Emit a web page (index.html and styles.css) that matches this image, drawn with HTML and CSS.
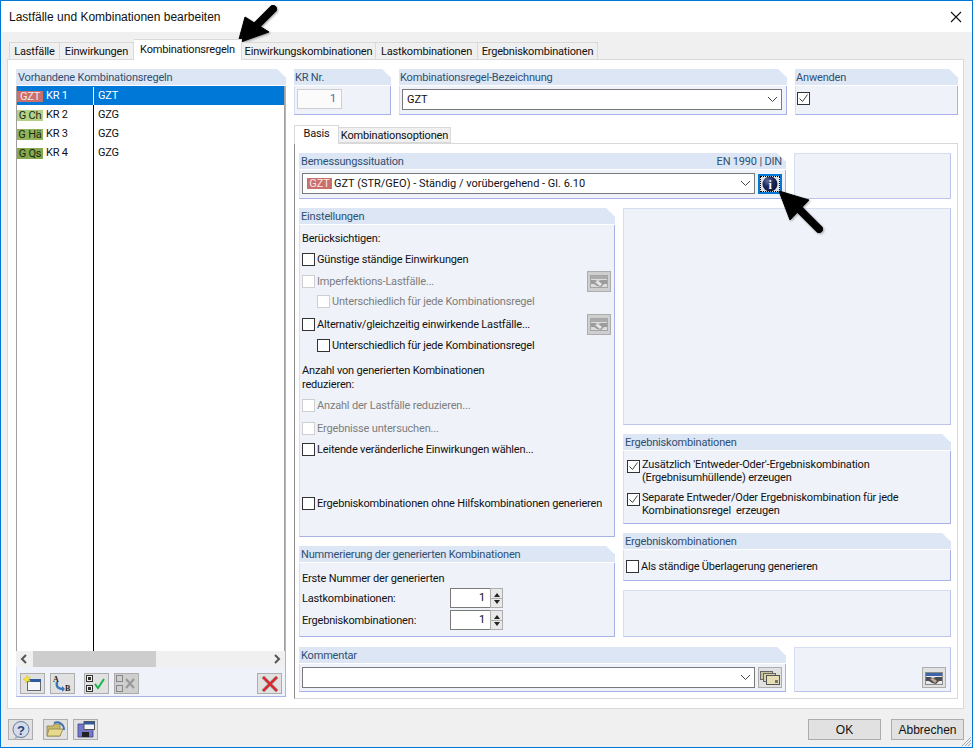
FILE: index.html
```html
<!DOCTYPE html>
<html lang="de">
<head>
    <meta charset="UTF-8">
    <title>Lastfälle und Kombinationen bearbeiten</title>
    <link rel="stylesheet" href="styles.css">
</head>
<body>
<div class="dialog">
    <div class="titlebar">
        <span>Lastfälle und Kombinationen bearbeiten</span>
        <svg class="close" width="12" height="12" viewBox="0 0 12 12"><path d="M1 1l10 10M11 1L1 11" stroke="#111" stroke-width="1.1" fill="none"/></svg>
    </div>

    <div class="main">
        <div class="tabs">
            <div class="tab t1">Lastfälle</div>
            <div class="tab t2">Einwirkungen</div>
            <div class="tab t3 active">Kombinationsregeln</div>
            <div class="tab t4">Einwirkungskombinationen</div>
            <div class="tab t5">Lastkombinationen</div>
            <div class="tab t6">Ergebniskombinationen</div>
        </div>

        <div class="panel">
            <!-- Liste links -->
            <section class="group rules">
                <h3 class="group-head">Vorhandene Kombinationsregeln</h3>
                <div class="list">
                    <div class="list-row selected"><div class="cell-a"><span class="badge gzt">GZT</span>KR 1</div><div class="cell-b">GZT</div></div>
                    <div class="list-row"><div class="cell-a"><span class="badge gch">G Ch</span>KR 2</div><div class="cell-b">GZG</div></div>
                    <div class="list-row"><div class="cell-a"><span class="badge gha">G Hä</span>KR 3</div><div class="cell-b">GZG</div></div>
                    <div class="list-row"><div class="cell-a"><span class="badge gqs">G Qs</span>KR 4</div><div class="cell-b">GZG</div></div>
                </div>
                <div class="hscroll">
                    <svg class="scroll-arrow" width="17" height="16" viewBox="0 0 17 16"><path d="M10 4L6 8l4 4" stroke="#555" stroke-width="2" fill="none"/></svg>
                    <div class="hscroll-track"><div class="hscroll-thumb"></div></div>
                    <svg class="scroll-arrow" width="17" height="16" viewBox="0 0 17 16"><path d="M7 4l4 4-4 4" stroke="#555" stroke-width="2" fill="none"/></svg>
                </div>
                <div class="list-tools">
                    <button class="icon-btn">
                        <svg width="19" height="17" viewBox="0 0 19 17"><rect x="4.500" y="4.500" width="13" height="11" fill="#f4f6f8" stroke="#667"/><rect x="4" y="4" width="14" height="3" fill="#2f5a9c"/><path d="M4 0l1 2.400 2.600-.4L6 4l1.400 2.400L4.800 6 3 8 2.600 5.400 0 4.400 2.400 3z" fill="#f5e23a" stroke="#c9b520" stroke-width=".4"/></svg>
                    </button>
                    <button class="icon-btn">
                        <svg width="21" height="19" viewBox="0 0 21 19"><text x="1" y="8" class="ico-letter">A</text><text x="13" y="17" class="ico-letter">B</text><path d="M5 8c-1 5 1 7 7 7" stroke="#3b78b8" stroke-width="2.400" fill="none"/><path d="M10 12l3 3-3 3z" fill="#3b78b8"/></svg>
                    </button>
                    <button class="icon-btn gap-l">
                        <svg width="21" height="18" viewBox="0 0 21 18"><rect x=".5" y=".5" width="6" height="6" fill="#eee" stroke="#333"/><rect x="2" y="2" width="3" height="3" fill="#333"/><rect x=".5" y="10.500" width="6" height="6" fill="#eee" stroke="#333"/><rect x="2" y="12" width="3" height="3" fill="#333"/><path d="M9 9l3 4 6-9" stroke="#16b54a" stroke-width="2" fill="none"/></svg>
                    </button>
                    <button class="icon-btn off">
                        <svg width="21" height="18" viewBox="0 0 21 18"><rect x=".5" y=".5" width="6" height="6" fill="none" stroke="#888"/><rect x=".5" y="10.500" width="6" height="6" fill="none" stroke="#888"/><path d="M10 4l8 9M18 4l-8 9" stroke="#999" stroke-width="2.200"/></svg>
                    </button>
                    <button class="icon-btn push-r">
                        <svg width="20" height="18" viewBox="0 0 20 18"><path d="M3 2l14 14M17 2L3 16" stroke="#9a9a9a" stroke-width="3.600"/><path d="M3 2l14 14M17 2L3 16" stroke="#e0232a" stroke-width="2.200"/></svg>
                    </button>
                </div>
            </section>

            <!-- rechte Seite -->
            <div class="right">
                <div class="top-row">
                    <section class="group kr-nr">
                        <h3 class="group-head">KR Nr.</h3>
                        <div class="group-body"><div class="num-box">1</div></div>
                    </section>
                    <section class="group kr-name">
                        <h3 class="group-head">Kombinationsregel-Bezeichnung</h3>
                        <div class="group-body">
                            <div class="combo wide"><span>GZT</span><svg class="chev" width="11" height="7" viewBox="0 0 11 7"><path d="M1 1l4.500 4.500L10 1" stroke="#444" fill="none"/></svg></div>
                        </div>
                    </section>
                    <section class="group kr-use">
                        <h3 class="group-head">Anwenden</h3>
                        <div class="group-body">
                            <span class="check on"><svg width="11" height="11" viewBox="0 0 11 11"><path d="M1.500 5.500l3 3 5-7" stroke="#444" fill="none"/></svg></span>
                        </div>
                    </section>
                </div>

                <div class="inner-tabs">
                    <div class="itab active">Basis</div>
                    <div class="itab">Kombinationsoptionen</div>
                </div>

                <div class="inner-panel">
                    <div class="band">
                        <section class="group situation">
                            <h3 class="group-head spread"><span>Bemessungssituation</span><span>EN 1990 | DIN</span></h3>
                            <div class="group-body">
                                <div class="combo-line">
                                    <div class="combo grow"><span class="badge gzt inline">GZT</span><span>GZT (STR/GEO) - Ständig / vorübergehend - Gl. 6.10</span><svg class="chev" width="11" height="7" viewBox="0 0 11 7"><path d="M1 1l4.500 4.500L10 1" stroke="#444" fill="none"/></svg></div>
                                    <button class="icon-btn info">
                                        <svg width="16" height="16" viewBox="0 0 16 16"><defs><radialGradient id="infoGrad" cx=".35" cy=".3" r=".8"><stop offset="0" stop-color="#5f6fa0"/><stop offset=".45" stop-color="#1c2a5c"/><stop offset="1" stop-color="#0d1538"/></radialGradient></defs><circle cx="8" cy="8" r="7.500" fill="url(#infoGrad)"/><text x="8" y="12.500" class="ico-i">i</text></svg>
                                    </button>
                                </div>
                            </div>
                        </section>
                        <section class="blank grow"></section>
                    </div>

                    <div class="middle">
                        <div class="col-left">
                            <section class="group settings">
                                <h3 class="group-head">Einstellungen</h3>
                                <div class="group-body">
                                    <div class="row">Berücksichtigen:</div>
                                    <div class="row m1"><span class="check"></span>Günstige ständige Einwirkungen</div>
                                    <div class="row m2 off"><span class="check"></span>Imperfektions-Lastfälle...<button class="icon-btn small off"><svg width="18" height="14" viewBox="0 0 18 14"><use href="#hands-off"/></svg></button></div>
                                    <div class="row indent off"><span class="check"></span>Unterschiedlich für jede Kombinationsregel</div>
                                    <div class="row m3"><span class="check"></span>Alternativ/gleichzeitig einwirkende Lastfälle...<button class="icon-btn small off"><svg width="18" height="14" viewBox="0 0 18 14"><use href="#hands-off"/></svg></button></div>
                                    <div class="row m1 indent"><span class="check"></span>Unterschiedlich für jede Kombinationsregel</div>
                                    <div class="row-text">Anzahl von generierten Kombinationen<br>reduzieren:</div>
                                    <div class="row m3 off"><span class="check"></span>Anzahl der Lastfälle reduzieren...</div>
                                    <div class="row m3 off"><span class="check"></span>Ergebnisse untersuchen...</div>
                                    <div class="row m1"><span class="check"></span>Leitende veränderliche Einwirkungen wählen...</div>
                                    <div class="row m34"><span class="check"></span>Ergebniskombinationen ohne Hilfskombinationen generieren</div>
                                </div>
                            </section>
                            <section class="group numbering">
                                <h3 class="group-head">Nummerierung der generierten Kombinationen</h3>
                                <div class="group-body">
                                    <div class="row">Erste Nummer der generierten</div>
                                    <div class="row spin-row first">Lastkombinationen:<div class="spin"><div class="spin-val">1</div><div class="spin-btns"><i class="up"></i><i class="down"></i></div></div></div>
                                    <div class="row spin-row">Ergebniskombinationen:<div class="spin"><div class="spin-val">1</div><div class="spin-btns"><i class="up"></i><i class="down"></i></div></div></div>
                                </div>
                            </section>
                        </div>
                        <div class="col-right">
                            <section class="blank tall"></section>
                            <section class="group either">
                                <h3 class="group-head">Ergebniskombinationen</h3>
                                <div class="group-body">
                                    <div class="wrap-row"><span class="check on"><svg width="11" height="11" viewBox="0 0 11 11"><path d="M1.500 5.500l3 3 5-7" stroke="#444" fill="none"/></svg></span><div>Zusätzlich 'Entweder-Oder'-Ergebniskombination<br>(Ergebnisumhüllende) erzeugen</div></div>
                                    <div class="wrap-row"><span class="check on"><svg width="11" height="11" viewBox="0 0 11 11"><path d="M1.500 5.500l3 3 5-7" stroke="#444" fill="none"/></svg></span><div>Separate Entweder/Oder Ergebniskombination für jede<br>Kombinationsregel  erzeugen</div></div>
                                </div>
                            </section>
                            <section class="group permanent">
                                <h3 class="group-head">Ergebniskombinationen</h3>
                                <div class="group-body"><div class="row"><span class="check"></span>Als ständige Überlagerung generieren</div></div>
                            </section>
                            <section class="blank grow"></section>
                        </div>
                    </div>

                    <div class="band">
                        <section class="group situation comment">
                            <h3 class="group-head">Kommentar</h3>
                            <div class="group-body">
                                <div class="combo-line">
                                    <div class="combo grow"><svg class="chev" width="11" height="7" viewBox="0 0 11 7"><path d="M1 1l4.500 4.500L10 1" stroke="#444" fill="none"/></svg></div>
                                    <button class="icon-btn small">
                                        <svg width="20" height="14" viewBox="0 0 20 14"><rect x=".5" y=".5" width="12" height="8" fill="#c9c39a" stroke="#666"/><rect x="3.500" y="2.500" width="12" height="8" fill="#d8d2a8" stroke="#666"/><rect x="6.500" y="4.500" width="13" height="9" fill="#e6dfb6" stroke="#555"/><rect x="15" y="9" width="3" height="3" fill="#777"/></svg>
                                    </button>
                                </div>
                            </div>
                        </section>
                        <section class="blank grow corner-btn">
                            <button class="icon-btn small"><svg width="18" height="14" viewBox="0 0 18 14"><use href="#hands"/></svg></button>
                        </section>
                    </div>
                </div>
            </div>
        </div>

        <div class="bottom">
            <button class="icon-btn"><svg width="20" height="18" viewBox="0 0 20 18"><circle cx="10" cy="8.500" r="8" fill="#d5dbe8" stroke="#667a9c"/><path d="M5 15l-2 3 6-2z" fill="#9aa6bd"/><text x="10" y="14" class="ico-q">?</text></svg></button>
            <button class="icon-btn open"><svg width="20" height="17" viewBox="0 0 20 17"><path d="M1 5h6l1-2h6v12H1z" fill="#c9b969" stroke="#8d8350" stroke-width=".8"/><path d="M1 15l2-7h14l-3 7z" fill="#e6d98c" stroke="#8d8350" stroke-width=".8"/><path d="M8 2c5-2 10 1 10 7" stroke="#3f74b0" stroke-width="2" fill="none"/></svg></button>
            <button class="icon-btn"><svg width="18" height="17" viewBox="0 0 18 17"><path d="M1 3h13l2 2v11H1z" fill="#7478c8" stroke="#3a3f80" stroke-width=".8"/><rect x="5" y="11" width="7" height="5" fill="#222"/><rect x="7" y=".5" width="10.500" height="8" fill="#f2f4f8" stroke="#555"/><rect x="7" y="1" width="10.500" height="2.500" fill="#2f5a9c"/></svg></button>
            <div class="bottom-space"></div>
            <button class="text-btn">OK</button>
            <button class="text-btn">Abbrechen</button>
        </div>
    </div>

    <!-- gemeinsame Symbole -->
    <svg class="defs" width="0" height="0">
        <symbol id="hands" viewBox="0 0 18 14"><rect x=".5" y="1.500" width="17" height="12" fill="#e9e9e9" stroke="#8a8a8a"/><rect x="1" y="2" width="16" height="3" fill="#3d63a8"/><path d="M1 6h4l3 1 3-1h6v4h-3l-3 3-4-1-3-2H1z" fill="#4a4d55"/><path d="M5 8l3-1 4 3-2 2z" fill="#c9ab8c"/></symbol>
        <symbol id="hands-off" viewBox="0 0 18 14"><rect x=".5" y="1.500" width="17" height="12" fill="#dcdcdc" stroke="#a5a5a5"/><rect x="1" y="2" width="16" height="3" fill="#ababab"/><path d="M1 6h4l3 1 3-1h6v4h-3l-3 3-4-1-3-2H1z" fill="#9c9c9c"/><path d="M5 8l3-1 4 3-2 2z" fill="#e8e8e8"/></symbol>
    </svg>

    <!-- Pfeile aus dem Screenshot -->
    <svg class="arrow arrow-tab" width="50" height="50" viewBox="0 0 50 50"><path d="M10 43L17 17 41 32z" fill="#000" stroke="#000" stroke-linejoin="round"/><path d="M29 25L45 9" stroke="#000" stroke-width="8" stroke-linecap="round"/></svg>
    <svg class="arrow arrow-info" width="50" height="50" viewBox="0 0 50 50"><path d="M4 5L15 34 34 14z" fill="#000" stroke="#000" stroke-linejoin="round"/><path d="M25 24L44 43" stroke="#000" stroke-width="8" stroke-linecap="round"/></svg>
    <svg class="grip" width="12" height="12" viewBox="0 0 12 12"><path d="M11 2L2 11M11 5l-6 6M11 8l-3 3" stroke="#aaa"/></svg>
</div>
</body>
</html>
```
FILE: styles.css
```css
:root {
    --head: #dce6f4;
    --group: #eff3f9;
    --edge: #a9b2e6;
    --edge-light: #d6def2;
    --head-text: #2f4f72;
}

* {
    margin: 0;
    padding: 0;
    box-sizing: border-box;
}

body {
    font-family: Roboto, "Liberation Sans", Arial, sans-serif;
    font-size: 11px;
    letter-spacing: -.18px;
    color: #111;
    background: #fff;
    overflow: hidden;
}

button {
    font: inherit;
    color: inherit;
    letter-spacing: inherit;
}

.dialog {
    position: relative;
    width: 973px;
    height: 748px;
    border: 1px solid #0078d7;
    display: flex;
    flex-direction: column;
    background: #fff;
}

.titlebar {
    height: 31px;
    flex: none;
    display: flex;
    align-items: center;
    justify-content: space-between;
    padding: 0 10px 0 8px;
    font-family: "Liberation Sans", Arial, sans-serif;
    font-size: 12px;
    letter-spacing: 0;
}

.main {
    flex: 1;
    background: #f0f0f0;
    padding: 7px 8px 0 6px;
    display: flex;
    flex-direction: column;
}

/* Tabs oben */
.tabs {
    display: flex;
    align-items: flex-end;
    height: 21px;
    margin: 0 0 -1px 2px;
    position: relative;
    z-index: 1;
}

.tab {
    height: 18px;
    background: #f0f0f0;
    border: 1px solid #d9d9d9;
    border-left: 0;
    text-align: center;
    line-height: 18px;
}

.t1 { width: 51px; border-left: 1px solid #d9d9d9; }
.t2 { width: 74px; }
.t3 { width: 108px; }
.t4 { width: 134px; }
.t5 { width: 102px; }
.t6 { width: 120px; }

.tab.active {
    height: 21px;
    background: #fff;
    border-bottom: 0;
    line-height: 19px;
}

.panel {
    width: 957px;
    height: 650px;
    background: #fff;
    border: 1px solid #d9d9d9;
    padding: 9px 0 0 8px;
    display: flex;
    gap: 8px;
    align-items: flex-start;
}

/* Gruppen */
.group {
    background: var(--group);
    border-left: 1px solid var(--edge-light);
    border-right: 1px solid var(--edge);
    border-bottom: 1px solid var(--edge);
    clip-path: polygon(0 0, calc(100% - 9px) 0, 100% 9px, 100% 100%, 0 100%);
    display: flex;
    flex-direction: column;
}

.group-head {
    flex: none;
    height: 17px;
    background: var(--head);
    border-bottom: 1px solid #fff;
    margin: 0 -1px 0 -1px;
    padding: 0 2px;
    font-size: 11px;
    font-weight: normal;
    line-height: 17px;
    color: var(--head-text);
}

.top-row .group-head {
    padding: 0 1px;
}

.group-head.spread {
    display: flex;
    justify-content: space-between;
    padding-right: 4px;
}

.group-body {
    flex: 1;
    min-height: 0;
}

.blank {
    background: var(--group);
    border: 1px solid var(--edge-light);
    border-right-color: #bcc4ec;
    border-bottom-color: #bcc4ec;
}

.grow {
    flex: 1;
}

/* Liste */
.rules {
    width: 270px;
    height: 628px;
}

.list {
    height: 565px;
    flex: none;
    margin-left: -1px;
    border-left: 1px solid #a0a0a0;
    border-right: 1px solid #a0a0a0;
    background: linear-gradient(#000, #000) 76px 0 / 1px 100% no-repeat #fff;
}

.list-row {
    display: flex;
    height: 19px;
    padding-top: 1px;
    line-height: 18px;
}

.cell-a {
    width: 77px;
    flex: none;
    display: flex;
    align-items: center;
    white-space: nowrap;
}

.cell-b {
    padding-left: 4px;
}

.list-row.selected {
    background: #0078d7;
    color: #fff;
}

.list-row.selected .cell-a {
    border-right: 1px solid #fff;
}

.badge {
    width: 26px;
    height: 11px;
    flex: none;
    line-height: 11px;
    margin-right: 3px;
    text-align: center;
    white-space: nowrap;
    color: #1c2a10;
}

.badge.gzt { background: #cb6f6c; color: #f6e9e6; }
.badge.gch { background: #b4d188; }
.badge.gha { background: #92b45c; }
.badge.gqs { background: #86a84c; }

.badge.inline {
    width: 25px;
    margin-right: 2px;
}

.hscroll {
    flex: none;
    height: 16px;
    margin-left: -1px;
    background: #f0f0f0;
    display: flex;
    align-items: center;
}

.scroll-arrow {
    flex: none;
}

.hscroll-track {
    flex: 1;
    height: 16px;
}

.hscroll-thumb {
    width: 123px;
    height: 16px;
    background: #cdcdcd;
}

.list-tools {
    flex: 1;
    display: flex;
    align-items: flex-start;
    padding: 6px 3px 0 3px;
    gap: 5px;
}

.icon-btn {
    width: 25px;
    height: 21px;
    flex: none;
    background: #e1e1e1;
    border: 1px solid #adadad;
    display: flex;
    align-items: center;
    justify-content: center;
}

.icon-btn.off {
    background: #cfcfcf;
}

.gap-l { margin-left: 4px; }
.push-r { margin-left: auto; }

.ico-letter {
    font: bold 8px "Liberation Serif", serif;
    fill: #222;
}

.ico-i {
    font: bold 12px "Liberation Serif", serif;
    fill: #fff;
    text-anchor: middle;
}

.ico-q {
    font: bold 13px "Liberation Sans", sans-serif;
    fill: #27457c;
    text-anchor: middle;
}

/* rechte Seite */
.right {
    width: 664px;
}

.top-row {
    display: flex;
    gap: 8px;
    height: 46px;
}

.kr-nr { width: 97px; }
.kr-name { width: 388px; }
.kr-use { flex: 1; }

.kr-nr .group-body { padding: 3px 0 0 2px; }
.kr-name .group-body { padding: 3px 0 0 2px; }
.kr-use .group-body { padding: 6px 0 0 1px; }

.num-box {
    width: 45px;
    height: 20px;
    background: #fbfbfb;
    border: 1px solid #cfcfcf;
    text-align: right;
    padding-right: 5px;
    line-height: 18px;
    color: #55688a;
}

.combo {
    height: 21px;
    background: #fff;
    border: 1px solid #7a7a7a;
    display: flex;
    align-items: center;
    padding-left: 4px;
    letter-spacing: 0;
}

.combo.wide { width: 380px; }

.chev {
    margin-left: auto;
    margin-right: 3px;
}

.check {
    width: 13px;
    height: 13px;
    flex: none;
    background: #fff;
    border: 1px solid #333;
    display: inline-flex;
    align-items: center;
    justify-content: center;
}

.inner-tabs {
    display: flex;
    align-items: flex-end;
    height: 18px;
    margin-top: 10px;
    position: relative;
    z-index: 1;
}

.itab {
    width: 112px;
    height: 16px;
    background: #f0f0f0;
    border: 1px solid #d9d9d9;
    border-left: 0;
    text-align: center;
    line-height: 16px;
}

.itab.active {
    width: 45px;
    height: 19px;
    margin-bottom: -1px;
    background: #fff;
    border-left: 1px solid #d9d9d9;
    border-bottom: 0;
    line-height: 15px;
}

.inner-panel {
    height: 556px;
    background: #fff;
    border: 1px solid #d9d9d9;
    border-left-color: #8c8c8c;
    padding: 9px 6px 0 4px;
    display: flex;
    flex-direction: column;
}

.band {
    display: flex;
    gap: 8px;
    height: 46px;
    flex: none;
}

.situation {
    width: 487px;
}

.situation .group-body {
    padding: 3px 0 0 2px;
}

.combo-line {
    display: flex;
    gap: 3px;
    width: 480px;
}

.icon-btn.info {
    height: 20px;
    margin-top: 1px;
    width: 24px;
    border: 2px solid #0078d7;
    outline: 1px dotted #000;
    outline-offset: -3px;
}

.middle {
    display: flex;
    gap: 8px;
    height: 429px;
    margin-top: 9px;
    flex: none;
}

.middle + .band {
    margin-top: 10px;
    height: 45px;
}

.col-left {
    width: 316px;
    display: flex;
    flex-direction: column;
    gap: 9px;
}

.col-right {
    width: 328px;
    display: flex;
    flex-direction: column;
    gap: 9px;
}

.settings { height: 329px; }
.numbering { height: 91px; }
.tall { height: 217px; }
.either { height: 90px; }
.permanent { height: 48px; }

.settings .group-body {
    padding: 3px 0 0 2px;
}

.row {
    height: 20px;
    display: flex;
    align-items: center;
    gap: 2px;
}

.row.off {
    color: #7d7d7d;
}

.row.off .check {
    border-color: #cfcfcf;
}

.row.indent { padding-left: 15px; }
.m1 { margin-top: 1px; }
.m2 { margin-top: 2px; }
.m3 { margin-top: 3px; }
.m34 { margin-top: 34px; }

.row-text {
    margin-top: 9px;
    line-height: 14px;
}

.row .icon-btn.small {
    margin-left: auto;
    margin-right: 3px;
}

.icon-btn.small {
    width: 24px;
}

.numbering .group-body {
    padding: 5px 0 0 2px;
}

.spin-row {
    justify-content: space-between;
    padding-right: 112px;
}

.spin-row + .spin-row { margin-top: 2px; }

.spin {
    width: 53px;
    height: 20px;
    display: flex;
    margin-right: -1px;
    flex: none;
}

.spin-val {
    width: 40px;
    background: #fff;
    border: 1px solid #7a7a7a;
    border-right: 0;
    text-align: right;
    padding-right: 5px;
    line-height: 18px;
}

.spin-btns {
    width: 13px;
    border: 1px solid #adadad;
    background: linear-gradient(#adadad, #adadad) 0 50% / 100% 1px no-repeat #e9e9e9;
    display: flex;
    flex-direction: column;
    align-items: center;
    justify-content: space-around;
    padding: 2px 0;
}

.spin-btns i {
    width: 0;
    height: 0;
    border-left: 3px solid transparent;
    border-right: 3px solid transparent;
}

.spin-btns .up { border-bottom: 4px solid #222; }
.spin-btns .down { border-top: 4px solid #222; }

.either .group-body {
    padding: 7px 0 0 3px;
}

.wrap-row {
    display: flex;
    gap: 2px;
    line-height: 13px;
    margin-bottom: 7px;
    white-space: pre-wrap;
}

.wrap-row .check {
    margin-top: 2px;
}

.permanent .group-body {
    padding: 6px 0 0 2px;
}

.corner-btn {
    display: flex;
    align-items: flex-end;
    justify-content: flex-end;
    padding: 0 4px 3px 0;
}

/* untere Leiste */
.bottom {
    display: flex;
    align-items: flex-start;
    padding: 10px 0 0 1px;
    gap: 5px;
}

.open { margin-left: 5px; }

.bottom-space { flex: 1; }

.text-btn {
    width: 73px;
    height: 21px;
    background: #e1e1e1;
    border: 1px solid #adadad;
    font-family: "Liberation Sans", Arial, sans-serif;
    font-size: 12px;
    letter-spacing: 0;
}

.bottom .text-btn:last-child {
    margin-left: 5px;
}

/* Overlays */
.defs {
    position: absolute;
}

.arrow {
    position: absolute;
    filter: drop-shadow(1px 1px 1px rgba(0,0,0,.35));
}

.arrow-tab { left: 227px; top: -1px; }
.arrow-info { left: 774px; top: 185px; }

.grip {
    position: absolute;
    right: 0;
    bottom: 0;
}
```
